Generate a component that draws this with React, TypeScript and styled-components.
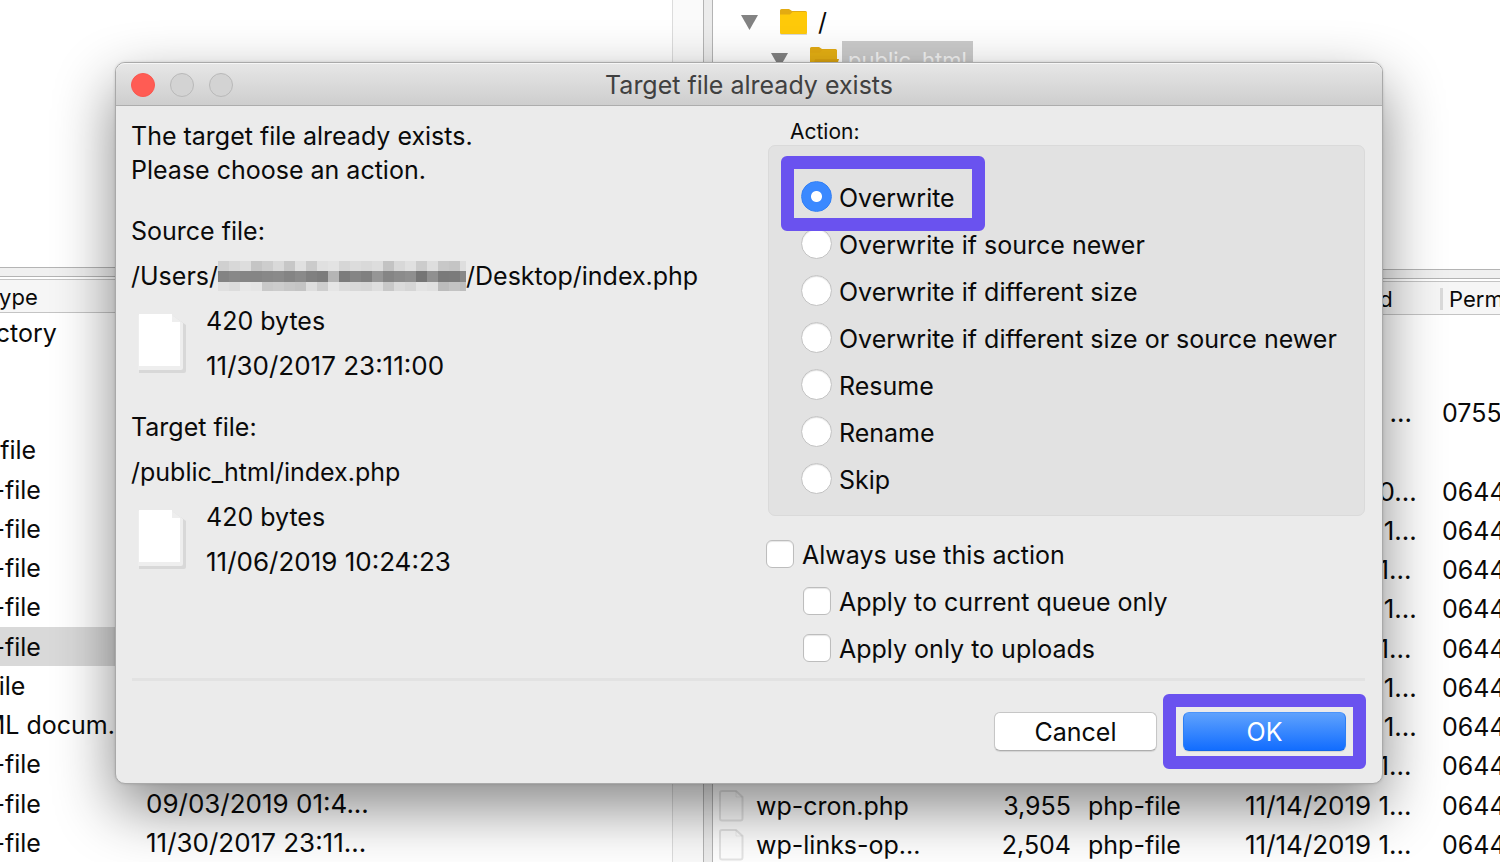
import React from "react";
import styled, { createGlobalStyle, css } from "styled-components";

const GlobalStyle = createGlobalStyle`
  *, *::before, *::after { box-sizing: border-box; }
  body {
    margin: 0;
    background: #fff;
    color: #0a0a0a;
    font-family: Inter, "Liberation Sans", sans-serif;
    font-size: 25px;
  }
`;

const ACCENT = "#6a52ef";

/* ---------- file manager behind the dialog ---------- */

const Desktop = styled.div`
  position: relative;
  min-height: 100vh;
  overflow: hidden;
`;

const Browser = styled.main`
  display: grid;
  grid-template-columns: minmax(0, 713fr) minmax(0, 787fr);
  height: 100vh;
  min-height: 862px;
`;

const Side = styled.section`
  display: flex;
  min-width: 0;
  overflow: hidden;
`;

const Panel = styled.div`
  flex: 1;
  min-width: 0;
  overflow: hidden;
  display: flex;
  flex-direction: column;
`;

const ScrollTrack = styled.div`
  width: 31px;
  background: #fafafa;
  border-left: 1px solid #dcdcdc;
`;

const PaneDivider = styled.div`
  width: 10px;
  background: #ececec;
  border: solid #b4b4b4;
  border-width: 0 1px;
`;

const TreeArea = styled.div<{ $height: number }>`
  flex: none;
  height: ${(p) => p.$height}px;
  padding-top: 3px;
`;

const TreeRow = styled.div<{ $depth: number }>`
  display: flex;
  align-items: center;
  height: 38px;
  padding-left: ${(p) => 28 + p.$depth * 30}px;
`;

const TreeIcon = styled.svg`
  flex: none;
  margin-left: 21px;
`;

const TreeLabel = styled.span<{ $selected?: boolean }>`
  margin-left: 3px;
  padding: 0 6px;
  line-height: 38px;
  ${(p) =>
    p.$selected &&
    css`
      background: #cbcbcb;
      color: #f4f4f4;
      font-size: 22px;
    `}
`;

const Splitter = styled.div`
  flex: none;
  height: 10px;
  background: #f0f0f0;
  border: solid #b4b4b4;
  border-width: 1px 0;
  margin-bottom: 2px;
`;

const FileTable = styled.table<{ $offset?: number }>`
  flex: none;
  table-layout: fixed;
  border-collapse: separate;
  border-spacing: 0;
  width: calc(100% + ${(p) => p.$offset ?? 0}px);
  margin-left: -${(p) => p.$offset ?? 0}px;
  white-space: nowrap;
`;

const HeadCell = styled.th<{ $first?: boolean }>`
  height: 34px;
  padding: 1px 0 0 ${(p) => (p.$first ? 7 : 15)}px;
  background: #f6f6f6;
  border: solid #c4c4c4;
  border-width: 1px 0;
  font-size: 22px;
  font-weight: 400;
  text-align: left;

  > span {
    display: block;
    line-height: 22px;
    padding-left: ${(p) => (p.$first ? 0 : 6)}px;
    border-left: ${(p) => (p.$first ? 0 : 3)}px solid #dadada;
  }
`;

const FileRow = styled.tr<{ $selected?: boolean }>`
  height: 39px;
  background: ${(p) => (p.$selected ? "#d9d9d9" : "transparent")};
  &:nth-child(4n) {
    height: 40px;
  }
`;

const Cell = styled.td<{ $kind?: "flush" | "number" | "date" }>`
  padding: 0 0 0 ${(p) => (p.$kind === "flush" || p.$kind === "number" ? 0 : 17)}px;
  font-size: ${(p) => (p.$kind === "date" ? 26 : 25)}px;
  line-height: 38px;
  text-align: ${(p) => (p.$kind === "number" ? "right" : "left")};
`;

const FileName = styled.span`
  display: flex;
  align-items: center;
  gap: 12px;
  padding-left: 6px;
`;

/* ---------- dialog ---------- */

const Dialog = styled.form`
  position: absolute;
  top: 62px;
  left: 115px;
  right: 117px;
  display: flex;
  flex-direction: column;
  background: #ebebeb;
  border: 1px solid #a9a9a9;
  border-radius: 10px;
  box-shadow: 0 24px 60px rgba(0, 0, 0, 0.47), 0 0 3px rgba(0, 0, 0, 0.15);
`;

const TitleBar = styled.header`
  display: grid;
  grid-template-columns: 1fr auto 1fr;
  align-items: center;
  height: 43px;
  padding: 0 15px;
  background: linear-gradient(#e6e6e6, #cecece);
  border-top: 1px solid #f6f6f6;
  border-bottom: 1px solid #adadad;
  border-radius: 9px 9px 0 0;
`;

const Lights = styled.div`
  display: flex;
  gap: 15px;
`;

const Light = styled.button<{ $close?: boolean }>`
  width: 24px;
  height: 24px;
  padding: 0;
  border-radius: 50%;
  border: 1px solid ${(p) => (p.$close ? "#f9574f" : "#b9b9b9")};
  background: ${(p) => (p.$close ? "#ff5c54" : "#d3d3d3")};
`;

const Title = styled.h1`
  margin: 0;
  color: #404040;
  font-size: 25px;
  font-weight: 400;
  line-height: 34px;
`;

const Content = styled.div`
  display: grid;
  grid-template-columns: minmax(0, 1fr) 599px;
  padding: 12px 17px 0 15px;
`;

const Info = styled.div`
  padding-top: 1px;
`;

const Message = styled.p`
  margin: 0 0 21px;
  line-height: 34px;
`;

const FileBlock = styled.section`
  margin-bottom: 16px;
`;

const InfoLine = styled.div<{ $date?: boolean }>`
  display: flex;
  align-items: center;
  height: 45px;
  font-size: ${(p) => (p.$date ? 26 : 25)}px;
  white-space: nowrap;
`;

const Meta = styled.div`
  display: flex;
  gap: 20px;
  padding-left: 6px;
  > svg {
    margin-top: 16px;
  }
`;

const Options = styled.div`
  min-width: 0;
`;

const Group = styled.fieldset`
  margin: 0;
  padding: 0;
  border: 0;
`;

const GroupLabel = styled.legend`
  padding: 0 0 0 24px;
  font-size: 21px;
  line-height: 27px;
`;

const GroupBox = styled.div`
  display: flex;
  flex-direction: column;
  align-items: flex-start;
  margin-left: 2px;
  padding: 28px 0 12px 32px;
  background: #e2e2e2;
  border: 1px solid #dadada;
  border-radius: 7px;
`;

const ring = css`
  content: "";
  position: absolute;
  border: 13px solid ${ACCENT};
  border-radius: 6px;
  pointer-events: none;
`;

const Choice = styled.label<{ $ringed?: boolean }>`
  position: ${(p) => (p.$ringed ? "relative" : "static")};
  display: flex;
  align-items: center;
  gap: 7px;
  height: 47px;
  white-space: nowrap;
  ${(p) =>
    p.$ringed &&
    css`
      &::after {
        ${ring}
        inset: -18px -30px -10px -20px;
      }
    `}
`;

const Radio = styled.input`
  appearance: none;
  flex: none;
  width: 31px;
  height: 31px;
  margin: 0 0 3px;
  border: 1px solid #c3c3c3;
  border-radius: 50%;
  background: #fff;
  box-shadow: inset 0 1px 1px rgba(0, 0, 0, 0.12);
  &:checked {
    border-color: #3280f5;
    background: radial-gradient(circle, #fff 5px, #3b89ff 6px);
    box-shadow: none;
  }
`;

const Checks = styled.div`
  padding-top: 15px;
`;

const CheckLabel = styled.label<{ $nested?: boolean }>`
  display: flex;
  align-items: center;
  gap: 8px;
  height: 47px;
  padding-left: ${(p) => (p.$nested ? 37 : 0)}px;
`;

const Checkbox = styled.input`
  appearance: none;
  flex: none;
  width: 28px;
  height: 28px;
  margin: 0 0 2px;
  border: 1px solid #bdbdbd;
  border-radius: 6px;
  background: #fff;
  box-shadow: inset 0 1px 1px rgba(0, 0, 0, 0.1);
`;

const Rule = styled.hr`
  height: 3px;
  margin: 6px 17px 0 16px;
  border: 0;
  background: #e2e2e2;
`;

const Footer = styled.footer`
  display: flex;
  justify-content: flex-end;
  gap: 26px;
  padding: 31px 36px 32px;
`;

const Button = styled.button<{ $primary?: boolean }>`
  position: relative;
  width: 163px;
  height: 39px;
  padding: 2px 0 0;
  border: 1px solid #c6c6c6;
  border-bottom-color: #adadad;
  border-radius: 6px;
  background: #fff;
  box-shadow: 0 1px 1px rgba(0, 0, 0, 0.1);
  color: #0a0a0a;
  font: inherit;
  line-height: 35px;
  ${(p) =>
    p.$primary &&
    css`
      border-color: #4a94fb #2d7ff5 #1166e8;
      background: linear-gradient(#5fa2fd, #126dff);
      color: #fff;
      &::after {
        ${ring}
        inset: -19px -21px;
      }
    `}
`;

/* ---------- drawings ---------- */

const Arrow = () => (
  <svg width="17" height="15" viewBox="0 0 17 15" aria-hidden="true">
    <path d="M0 0H17L8.500 15Z" fill="#838383" />
  </svg>
);

const Folder = ({ open }: { open?: boolean }) => (
  <TreeIcon width="30" height="28" viewBox="0 0 30 28" aria-hidden="true">
    <path d="M1 25V3q0-1.500 1.500-1.500H10l3 2.500H26.500q1.500 0 1.500 1.500V27H2.500Q1 27 1 25Z" fill="#d9d9d9" />
    <path d="M1 10V2.500Q1 1 2.500 1H10l3 2H26.500Q28 3 28 4.500V10Z" fill="#e3ab12" />
    <path
      d="M1 6.500H11l2.500-2.500H28V24.500q0 1.500-1.500 1.500h-24Q1 26 1 24.500Z"
      fill={open ? "#e6b013" : "#ffca0a"}
    />
    {open && <path d="M6 13H30L26 26H3Z" fill="#dda510" />}
  </TreeIcon>
);

const Page = () => (
  <svg width="49" height="60" viewBox="0 0 49 60" aria-hidden="true">
    <path d="M2 2H36L49 11V57q0 2-2 2H2Z" fill="#d8d8d8" />
    <path d="M1 1H35L46 9V54q0 2-2 2H1Z" fill="#eeeeee" />
    <path d="M2 0H35V8H43V52H2Z" fill="#fff" />
  </svg>
);

const SmallPage = () => (
  <svg width="25" height="32" viewBox="0 0 25 32" aria-hidden="true">
    <path
      d="M3 1H17L23.500 7V28.500q0 2-2 2H3q-2 0-2-2V3q0-2 2-2Z"
      fill="#fff"
      stroke="#000"
      strokeOpacity="0.1"
      strokeWidth="2"
    />
    <path d="M17 1V7H23.500" fill="none" stroke="#000" strokeOpacity="0.06" />
  </svg>
);

const MOSAIC = [
  ["#d0d0d0", "#d8d8d8", "#dddddd", "#c5c5c5", "#cdcdcd", "#d9d9d9", "#c7c7c7", "#e0e0e0", "#cbcbcb", "#e0e0e0", "#e3e3e3", "#d6d6d6", "#dcdcdc", "#d9d9d9", "#dddddd", "#c3c3c3", "#d8d8d8", "#e0e0e0", "#cccccc", "#dedede", "#c8c8c8", "#c5c5c5", "#dedede"],
  ["#838383", "#888888", "#858585", "#858585", "#888888", "#8a8a8a", "#848484", "#8a8a8a", "#808080", "#7c7c7c", "#b5b5b5", "#7c7c7c", "#858585", "#808080", "#969696", "#858585", "#8b8b8b", "#8f8f8f", "#757575", "#909090", "#7a7a7a", "#7b7b7b", "#888888"],
  ["#e0e0e0", "#dcdcdc", "#e7e7e7", "#e5e5e5", "#c9c9c9", "#cccccc", "#c7c7c7", "#c4c4c4", "#dedede", "#cecece", "#e5e5e5", "#dcdcdc", "#d8d8d8", "#d6d6d6", "#dedede", "#c8c8c8", "#dadada", "#d5d5d5", "#e3e3e3", "#e0e0e0", "#bcbcbc", "#c3c3c3", "#bdbdbd"],
];

const Redaction = () => (
  <svg width="248" height="30" viewBox="0 0 248 30" shapeRendering="crispEdges" role="img" aria-label="hidden user name">
    {MOSAIC.map((row, y) =>
      row.map((fill, x) => (
        <rect key={`${y}-${x}`} x={x * 11} y={[0, 10, 21][y]} width="11" height={[10, 11, 9][y]} fill={fill} />
      ))
    )}
  </svg>
);

/* ---------- data ---------- */

const LOCAL: { type: string; date?: string; selected?: boolean }[] = [
  { type: "Directory" },
  { type: "" },
  { type: "" },
  { type: "css-file" },
  { type: "php-file" },
  { type: "php-file" },
  { type: "php-file" },
  { type: "php-file" },
  { type: "php-file", selected: true },
  { type: "txt-file" },
  { type: "HTML docum..." },
  { type: "php-file" },
  { type: "php-file", date: "09/03/2019 01:4..." },
  { type: "php-file", date: "11/30/2017 23:11..." },
];

const REMOTE: { name?: string; size?: string; type?: string; date?: string; perm?: string }[] = [
  {},
  {},
  { date: "10/06/2019 ...", perm: "0755" },
  {},
  { date: "11/14/2019 0...", perm: "0644" },
  { date: "11/06/2019 1...", perm: "0644" },
  { date: "11/14/2019 1...", perm: "0644" },
  { date: "11/06/2019 1...", perm: "0644" },
  { date: "11/14/2019 1...", perm: "0644" },
  { date: "11/06/2019 1...", perm: "0644" },
  { date: "11/06/2019 1...", perm: "0644" },
  { date: "11/14/2019 1...", perm: "0644" },
  { name: "wp-cron.php", size: "3,955", type: "php-file", date: "11/14/2019 1...", perm: "0644" },
  { name: "wp-links-op...", size: "2,504", type: "php-file", date: "11/14/2019 1...", perm: "0644" },
];

const ACTIONS = [
  "Overwrite",
  "Overwrite if source newer",
  "Overwrite if different size",
  "Overwrite if different size or source newer",
  "Resume",
  "Rename",
  "Skip",
];

const FileDetails = ({ size, date }: { size: string; date: string }) => (
  <Meta>
    <Page />
    <div>
      <InfoLine>{size}</InfoLine>
      <InfoLine $date>{date}</InfoLine>
    </div>
  </Meta>
);

export default function App() {
  return (
    <Desktop>
      <GlobalStyle />
      <Browser>
        <Side>
          <Panel>
            <TreeArea $height={267} />
            <Splitter />
            <FileTable $offset={52}>
              <colgroup>
                <col width="181" />
                <col />
              </colgroup>
              <thead>
                <tr>
                  <HeadCell $first>Filetype</HeadCell>
                  <HeadCell />
                </tr>
              </thead>
              <tbody>
                {LOCAL.map((f, i) => (
                  <FileRow key={i} $selected={f.selected}>
                    <Cell $kind="flush">{f.type}</Cell>
                    <Cell $kind="date">{f.date}</Cell>
                  </FileRow>
                ))}
              </tbody>
            </FileTable>
          </Panel>
          <ScrollTrack />
          <PaneDivider />
        </Side>
        <Side>
          <Panel>
            <TreeArea $height={269}>
              <TreeRow $depth={0}>
                <Arrow />
                <Folder />
                <TreeLabel>/</TreeLabel>
              </TreeRow>
              <TreeRow $depth={1}>
                <Arrow />
                <Folder open />
                <TreeLabel $selected>public_html</TreeLabel>
              </TreeRow>
            </TreeArea>
            <Splitter />
            <FileTable>
              <colgroup>
                <col width="247" />
                <col width="111" />
                <col width="157" />
                <col width="197" />
                <col />
              </colgroup>
              <thead>
                <tr>
                  <HeadCell />
                  <HeadCell />
                  <HeadCell />
                  <HeadCell>
                    <span>Last modified</span>
                  </HeadCell>
                  <HeadCell>
                    <span>Permissions</span>
                  </HeadCell>
                </tr>
              </thead>
              <tbody>
                {REMOTE.map((f, i) => (
                  <FileRow key={i}>
                    <Cell $kind="flush">
                      {f.name && (
                        <FileName>
                          <SmallPage />
                          {f.name}
                        </FileName>
                      )}
                    </Cell>
                    <Cell $kind="number">{f.size}</Cell>
                    <Cell>{f.type}</Cell>
                    <Cell $kind="date">{f.date}</Cell>
                    <Cell>{f.perm}</Cell>
                  </FileRow>
                ))}
              </tbody>
            </FileTable>
          </Panel>
        </Side>
      </Browser>

      <Dialog role="dialog" aria-labelledby="dialog-title" onSubmit={(e) => e.preventDefault()}>
        <TitleBar>
          <Lights>
            <Light type="button" $close aria-label="Close" />
            <Light type="button" disabled aria-label="Minimize" />
            <Light type="button" disabled aria-label="Zoom" />
          </Lights>
          <Title id="dialog-title">Target file already exists</Title>
        </TitleBar>
        <Content>
          <Info>
            <Message>
              The target file already exists.
              <br />
              Please choose an action.
            </Message>
            <FileBlock>
              <InfoLine>Source file:</InfoLine>
              <InfoLine>
                /Users/
                <Redaction />
                /Desktop/index.php
              </InfoLine>
              <FileDetails size="420 bytes" date="11/30/2017 23:11:00" />
            </FileBlock>
            <FileBlock>
              <InfoLine>Target file:</InfoLine>
              <InfoLine>/public_html/index.php</InfoLine>
              <FileDetails size="420 bytes" date="11/06/2019 10:24:23" />
            </FileBlock>
          </Info>
          <Options>
            <Group>
              <GroupLabel>Action:</GroupLabel>
              <GroupBox>
                {ACTIONS.map((label, i) => (
                  <Choice key={label} $ringed={i === 0}>
                    <Radio type="radio" name="action" value={label} defaultChecked={i === 0} />
                    {label}
                  </Choice>
                ))}
              </GroupBox>
            </Group>
            <Checks>
              <CheckLabel>
                <Checkbox type="checkbox" />
                Always use this action
              </CheckLabel>
              <CheckLabel $nested>
                <Checkbox type="checkbox" />
                Apply to current queue only
              </CheckLabel>
              <CheckLabel $nested>
                <Checkbox type="checkbox" />
                Apply only to uploads
              </CheckLabel>
            </Checks>
          </Options>
        </Content>
        <Rule />
        <Footer>
          <Button type="button">Cancel</Button>
          <Button type="submit" $primary>
            OK
          </Button>
        </Footer>
      </Dialog>
    </Desktop>
  );
}
